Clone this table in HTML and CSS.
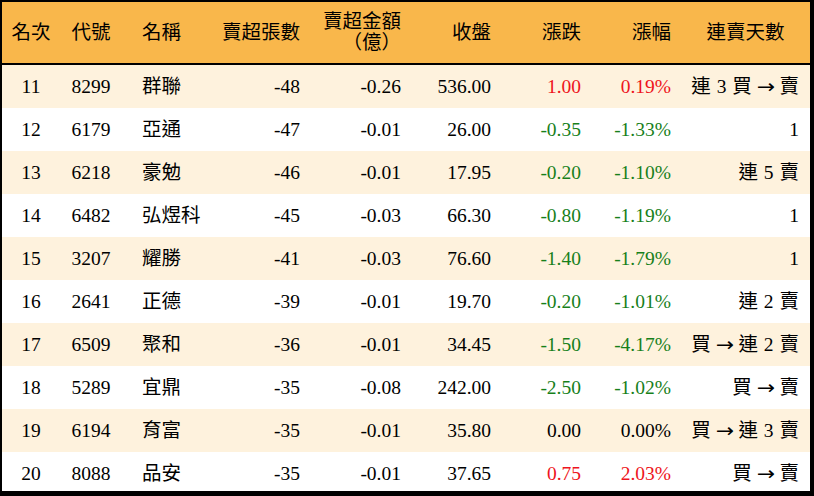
FILE: index.html
```html
<!DOCTYPE html>
<html lang="zh-Hant">
<head>
<meta charset="utf-8">
<title>賣超排行</title>
<link rel="stylesheet" href="styles.css">
</head>
<body>
<div class="frame">
<table class="rank">
<colgroup>
<col class="w1"><col class="w2"><col class="w3"><col class="w4"><col class="w5"><col class="w6"><col class="w7"><col class="w8"><col class="w9">
</colgroup>
<thead>
<tr>
<th class="c">名次</th>
<th class="c">代號</th>
<th class="l">名稱</th>
<th class="r">賣超張數</th>
<th class="r two">賣超金額<br>（億）</th>
<th class="r">收盤</th>
<th class="r">漲跌</th>
<th class="r">漲幅</th>
<th class="c last">連賣天數</th>
</tr>
</thead>
<tbody>
<tr class="alt"><td class="c">11</td><td class="c">8299</td><td class="l">群聯</td><td class="r">-48</td><td class="r">-0.26</td><td class="r">536.00</td><td class="r up">1.00</td><td class="r up">0.19%</td><td class="r days">連 3 買 <span class="arr">→</span> 賣</td></tr>
<tr><td class="c">12</td><td class="c">6179</td><td class="l">亞通</td><td class="r">-47</td><td class="r">-0.01</td><td class="r">26.00</td><td class="r dn">-0.35</td><td class="r dn">-1.33%</td><td class="r days">1</td></tr>
<tr class="alt"><td class="c">13</td><td class="c">6218</td><td class="l">豪勉</td><td class="r">-46</td><td class="r">-0.01</td><td class="r">17.95</td><td class="r dn">-0.20</td><td class="r dn">-1.10%</td><td class="r days">連 5 賣</td></tr>
<tr><td class="c">14</td><td class="c">6482</td><td class="l">弘煜科</td><td class="r">-45</td><td class="r">-0.03</td><td class="r">66.30</td><td class="r dn">-0.80</td><td class="r dn">-1.19%</td><td class="r days">1</td></tr>
<tr class="alt"><td class="c">15</td><td class="c">3207</td><td class="l">耀勝</td><td class="r">-41</td><td class="r">-0.03</td><td class="r">76.60</td><td class="r dn">-1.40</td><td class="r dn">-1.79%</td><td class="r days">1</td></tr>
<tr><td class="c">16</td><td class="c">2641</td><td class="l">正德</td><td class="r">-39</td><td class="r">-0.01</td><td class="r">19.70</td><td class="r dn">-0.20</td><td class="r dn">-1.01%</td><td class="r days">連 2 賣</td></tr>
<tr class="alt"><td class="c">17</td><td class="c">6509</td><td class="l">聚和</td><td class="r">-36</td><td class="r">-0.01</td><td class="r">34.45</td><td class="r dn">-1.50</td><td class="r dn">-4.17%</td><td class="r days">買 <span class="arr">→</span> 連 2 賣</td></tr>
<tr><td class="c">18</td><td class="c">5289</td><td class="l">宜鼎</td><td class="r">-35</td><td class="r">-0.08</td><td class="r">242.00</td><td class="r dn">-2.50</td><td class="r dn">-1.02%</td><td class="r days">買 <span class="arr">→</span> 賣</td></tr>
<tr class="alt"><td class="c">19</td><td class="c">6194</td><td class="l">育富</td><td class="r">-35</td><td class="r">-0.01</td><td class="r">35.80</td><td class="r">0.00</td><td class="r">0.00%</td><td class="r days">買 <span class="arr">→</span> 連 3 賣</td></tr>
<tr><td class="c">20</td><td class="c">8088</td><td class="l">品安</td><td class="r">-35</td><td class="r">-0.01</td><td class="r">37.65</td><td class="r up">0.75</td><td class="r up">2.03%</td><td class="r days">買 <span class="arr">→</span> 賣</td></tr>
</tbody>
</table>
</div>
</body>
</html>
```

FILE: styles.css
```css
html, body {
  margin: 0;
  padding: 0;
  background: #000;
}

.frame {
  box-sizing: border-box;
  width: 814px;
  height: 496px;
  border-top: 2px solid #000;
  border-left: 2px solid #000;
  border-right: 4px solid #000;
  border-bottom: 5px solid #000;
  background: #fff;
  overflow: hidden;
}

.rank {
  width: 808px;
  border-collapse: collapse;
  table-layout: fixed;
  font-family: "Liberation Serif", "Noto Sans CJK TC", serif;
  font-size: 19.5px;
  color: #000;
}

.w1 { width: 58px; }
.w2 { width: 62px; }
.w3 { width: 78px; }
.w4 { width: 110px; }
.w5 { width: 101px; }
.w6 { width: 90px; }
.w7 { width: 90px; }
.w8 { width: 90px; }
.w9 { width: 129px; }

.rank th {
  height: 59px;
  padding: 0;
  background: #f9b74b;
  font-weight: normal;
  border-bottom: 2px solid #000;
  line-height: 21px;
  vertical-align: middle;
}

.rank td {
  height: 43px;
  padding: 0;
  line-height: 22px;
  vertical-align: middle;
  white-space: nowrap;
}

.rank tbody tr.alt td {
  background: #fef2dd;
}

.c { text-align: center; }
.l { text-align: left; padding-left: 20px !important; }
.r { text-align: right; padding-right: 10px !important; }
td.days { padding-right: 11px !important; word-spacing: 1px; }
th.last { text-align: center; }
th.two { padding-bottom: 2px; }

.arr {
  font-family: "DejaVu Sans", sans-serif;
  font-size: 19px;
  display: inline-block;
  transform: scaleX(1.15);
}

.up { color: #ee1420; }
.dn { color: #17801a; }
```
